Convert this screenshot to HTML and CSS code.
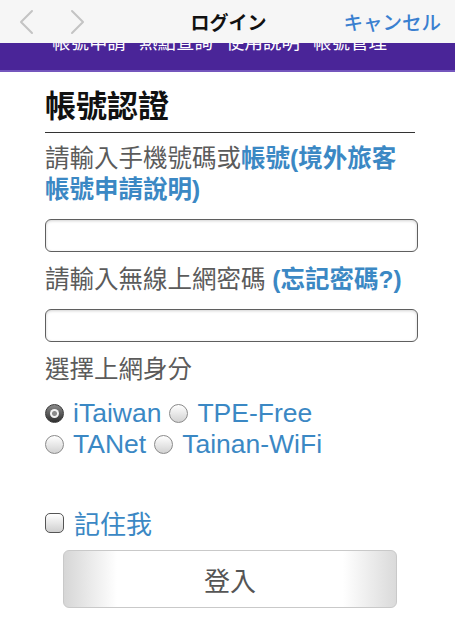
FILE: index.html
```html
<!DOCTYPE html>
<html lang="zh-Hant">
<head>
<meta charset="utf-8">
<title>ログイン</title>
<link rel="stylesheet" href="styles.css">
</head>
<body>
<header class="toolbar">
  <div class="nav-arrows">
    <svg class="chev" width="16" height="26" viewBox="0 0 16 26"><path d="M13 2 L2 13 L13 24" fill="none" stroke="#c4c4c4" stroke-width="2" stroke-linecap="round" stroke-linejoin="round"/></svg>
    <svg class="chev" width="16" height="26" viewBox="0 0 16 26"><path d="M3 2 L14 13 L3 24" fill="none" stroke="#c4c4c4" stroke-width="2" stroke-linecap="round" stroke-linejoin="round"/></svg>
  </div>
  <div class="toolbar-title">ログイン</div>
  <div class="toolbar-action">キャンセル</div>
</header>
<nav class="menu">
  <div class="menu-inner">
    <span>帳號申請</span><span>熱點查詢</span><span>使用說明</span><span>帳號管理</span>
  </div>
</nav>
<main class="content">
  <h1 class="title">帳號認證</h1>
  <hr class="rule">
  <p class="label">請輸入手機號碼或<a class="link">帳號(境外旅客<br>帳號申請說明)</a></p>
  <div class="field"></div>
  <p class="label">請輸入無線上網密碼 <a class="link">(忘記密碼?)</a></p>
  <div class="field"></div>
  <p class="label">選擇上網身分</p>
  <div class="radios">
    <div class="radio-line">
      <span class="radio checked"></span><span class="opt">iTaiwan</span>
      <span class="radio"></span><span class="opt">TPE-Free</span>
    </div>
    <div class="radio-line">
      <span class="radio"></span><span class="opt">TANet</span>
      <span class="radio"></span><span class="opt">Tainan-WiFi</span>
    </div>
  </div>
  <div class="remember">
    <span class="checkbox"></span><span class="opt">記住我</span>
  </div>
  <div class="btn">登入</div>
</main>
</body>
</html>
```

FILE: styles.css
```css
* { box-sizing: border-box; }
html, body { margin: 0; padding: 0; background: #fff; }
body {
  font-family: "Liberation Sans", "Noto Sans CJK TC", sans-serif;
  width: 455px;
  height: 620px;
  overflow: hidden;
}
.toolbar {
  height: 43px;
  background: #f6f6f6;
  display: grid;
  grid-template-columns: 1fr auto 1fr;
  align-items: center;
}
.nav-arrows {
  display: flex;
  gap: 34px;
  padding-left: 19px;
  padding-top: 1px;
}
.chev { display: block; }
.toolbar-title {
  font-family: "Noto Sans CJK JP", sans-serif;
  font-weight: 700;
  font-size: 19px;
  line-height: 24px;
  color: #111;
  padding-left: 2px;
}
.toolbar-action {
  font-family: "Noto Sans CJK JP", sans-serif;
  font-size: 19.5px;
  line-height: 24px;
  font-weight: 500;
  color: #3a80d0;
  text-align: right;
  padding-right: 14px;
}
.menu {
  height: 29px;
  background: #4a2598;
  border-bottom: 2px solid #7456bd;
  overflow: hidden;
}
.menu-inner {
  margin-top: -15px;
  padding-left: 52px;
  display: flex;
  gap: 13px;
  font-family: "Noto Sans CJK TC", sans-serif;
  font-size: 18.5px;
  line-height: 26px;
  color: #fff;
}
.content {
  width: 373px;
  margin-left: 45px;
  display: flex;
  flex-direction: column;
}
.title {
  margin: 12px 0 0;
  font-family: "Noto Sans CJK TC", sans-serif;
  font-weight: 700;
  font-size: 31px;
  line-height: 40px;
  color: #111;
}
.rule {
  margin: 8px 0 0;
  width: 370px;
  height: 0;
  border: 0;
  border-top: 1.5px solid #333;
}
.label {
  margin: 10px 0 0;
  font-size: 24.5px;
  line-height: 31px;
  color: #5b5b5b;
}
.link {
  color: #3b88c4;
  font-weight: 700;
}
.field {
  margin-top: 14px;
  height: 33px;
  border: 1.5px solid #5f5f5f;
  border-radius: 6px;
  box-shadow: inset 0 1px 3px rgba(0,0,0,0.18);
  background: #fff;
}
.field + .label { margin-top: 12px; }
.radios { margin-top: 13px; }
.radio-line {
  display: flex;
  align-items: center;
  height: 31px;
}
.opt {
  font-family: "Liberation Sans", "Noto Sans CJK TC", sans-serif;
  font-size: 26.5px;
  color: #3b88c4;
  margin-left: 9px;
  margin-right: 8px;
}
.radio {
  width: 19px;
  height: 19px;
  border-radius: 50%;
  border: 1px solid #8a8a8a;
  background: linear-gradient(#ffffff, #d2d2d2);
  position: relative;
  flex: none;
}
.radio.checked {
  border-color: #3a3a3a;
  background: linear-gradient(#8a8a8a, #2e2e2e);
}
.radio.checked::after {
  content: "";
  position: absolute;
  left: 4px;
  top: 4px;
  width: 9px;
  height: 9px;
  border-radius: 50%;
  background: radial-gradient(circle, #8a8a8a 0 2px, #f2f2f2 3px);
}
.remember {
  margin-top: 47px;
  display: flex;
  align-items: center;
  height: 31px;
}
.remember .opt { font-family: "Noto Sans CJK TC", sans-serif; font-size: 26px; margin-left: 10px; }
.checkbox {
  width: 19px;
  height: 20px;
  border-radius: 5px;
  border: 1.5px solid #555;
  background: linear-gradient(#ffffff, #cfcfcf);
  flex: none;
}
.btn {
  margin: 12px 0 0 18px;
  width: 334px;
  height: 58px;
  border: 1px solid #c9c9c9;
  border-radius: 6px;
  background: linear-gradient(to right, #d6d6d6 0%, #ffffff 16%, #ffffff 84%, #dadada 100%);
  display: flex;
  align-items: center;
  justify-content: center;
  font-family: "Noto Sans CJK TC", sans-serif;
  font-size: 26px;
  color: #555;
}
```
